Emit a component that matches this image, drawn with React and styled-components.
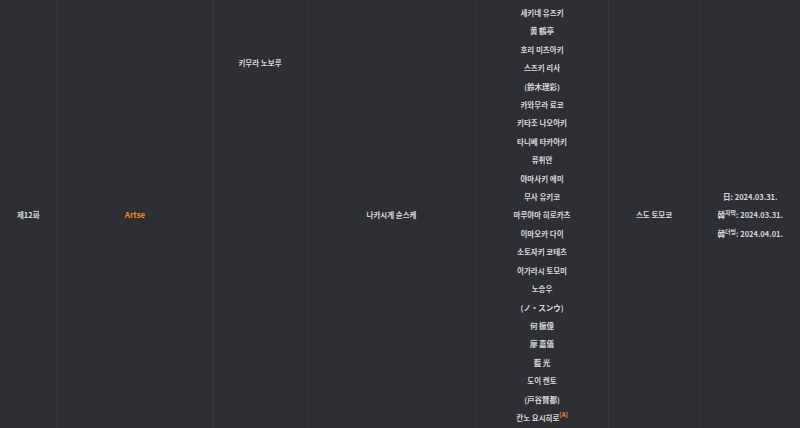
import React from 'react'
import styled, { createGlobalStyle } from 'styled-components'

const GlobalStyle = createGlobalStyle`
    html, body {
        margin: 0;
        padding: 0;
        background-color: #2e2f35;
        overflow: hidden;
    }
`;

const cast = [
    '세키네 유즈키',
    '黄 鶴亭',
    '호리 미츠아키',
    '스즈키 리사',
    '(鈴木理彩)',
    '카와무라 료코',
    '키타조 나오아키',
    '타니베 타카아키',
    '류취안',
    '야마사키 에미',
    '무사 유키코',
    '마루야마 히로카츠',
    '이마오카 다이',
    '소토자키 코테츠',
    '이가라시 토모미',
    '노승우',
    '(ノ・スンウ)',
    '何 振偉',
    '廖 嘉儀',
    '藍 光',
    '도이 켄토',
    '(戸谷賢都)',
]

function App() {
    return (
        <>
            <GlobalStyle />
            <Table>
                <colgroup>
                    <col style={{ width: 57 }} />
                    <col style={{ width: 156 }} />
                    <col style={{ width: 94 }} />
                    <col style={{ width: 169 }} />
                    <col style={{ width: 132 }} />
                    <col style={{ width: 92 }} />
                    <col style={{ width: 100 }} />
                </colgroup>
                <tbody>
                    <tr>
                        <Cell>제12화</Cell>
                        <Cell><Accent>Artse</Accent></Cell>
                        <Cell $top>키무라 노보루</Cell>
                        <Cell>나카시게 슌스케</Cell>
                        <Cell>
                            {cast.map((name) => (
                                <Line key={name}>{name}</Line>
                            ))}
                            <Line>칸노 요시히로<Note>[A]</Note></Line>
                        </Cell>
                        <Cell>스도 토모코</Cell>
                        <Cell>
                            <Line>日: 2024.03.31.</Line>
                            <Line>韓<Sup>자막</Sup>: 2024.03.31.</Line>
                            <Line>韓<Sup>더빙</Sup>: 2024.04.01.</Line>
                        </Cell>
                    </tr>
                </tbody>
            </Table>
        </>
    )
}

const Table = styled.table`
    border-collapse: collapse;
    table-layout: fixed;
    width: 800px;
    font-family: "Noto Sans CJK KR", "Noto Sans", sans-serif;
    font-size: 7.5px;
    font-weight: 700;
    color: #d6d6d8;
`;

const Cell = styled.td`
    border-left: 1px solid #383940;
    padding: ${({ $top }) => ($top ? '54px 4px 4px' : '4px')};
    text-align: center;
    vertical-align: ${({ $top }) => ($top ? 'top' : 'middle')};
    line-height: 18.4px;
    &:first-child{
        border-left: none;
    }
`;

const Line = styled.div`
    white-space: nowrap;
`;

const Accent = styled.span`
    color: #e8901a;
    font-size: 8px;
`;

const Sup = styled.sup`
    font-size: 6px;
    vertical-align: 3px;
    line-height: 0;
`;

const Note = styled(Sup)`
    color: #e8901a;
    vertical-align: 4px;
`;

export default App
